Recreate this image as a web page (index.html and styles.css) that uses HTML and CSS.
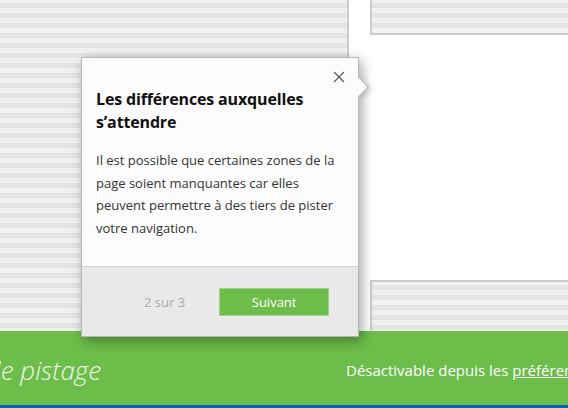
FILE: index.html
```html
<!DOCTYPE html>
<html lang="fr">
<head>
<meta charset="utf-8">
<link rel="stylesheet" href="styles.css">
</head>
<body>
<div class="page">
  <div class="main">
    <div class="left-panel"></div>
    <div class="right-col">
      <div class="box box-top"></div>
      <div class="spacer"></div>
      <div class="box box-bottom"></div>
    </div>
  </div>
  <div class="banner">
    <div class="banner-left"><span class="banner-title">Protection contre le pistage</span></div>
    <span class="banner-note">Désactivable depuis les <u>préférences</u></span>
  </div>

  <div class="popover">
    <div class="arrow"></div>
    <div class="pop-body">
      <button class="close" aria-label="Fermer">
        <svg width="12" height="12" viewBox="0 0 12 12"><path d="M1 1L11 11M11 1L1 11" stroke="#555" stroke-width="1.2" fill="none"/></svg>
      </button>
      <h2 class="pop-title">Les différences auxquelles s’attendre</h2>
      <p class="pop-text">Il est possible que certaines zones de la page soient manquantes car elles peuvent permettre à des tiers de pister votre navigation.</p>
    </div>
    <div class="pop-footer">
      <span class="step">2 sur 3</span>
      <button class="next">Suivant</button>
    </div>
  </div>
</div>
</body>
</html>
```
FILE: styles.css
```css
* { box-sizing: border-box; }
html, body { margin: 0; padding: 0; }
body {
  width: 568px;
  height: 408px;
  overflow: hidden;
  font-family: "Open Sans", "Noto Sans", sans-serif;
  background: #fff;
}
.page {
  position: relative;
  width: 568px;
  height: 408px;
  overflow: hidden;
  display: flex;
  flex-direction: column;
}
.main {
  height: 331px;
  display: flex;
  gap: 21px;
}
.left-panel, .box {
  background: repeating-linear-gradient(to bottom, #f1f1f1 0 3px, #e4e4e4 3px 8px, #f1f1f1 8px 10px);
}
.left-panel {
  width: 349px;
  border-right: 2px solid #c8cccf;
}
.right-col {
  flex: 1;
  display: flex;
  flex-direction: column;
  margin-right: -20px;
}
.box-top {
  height: 35px;
  border-left: 2px solid #c8cccf;
  border-bottom: 2px solid #c8cccf;
}
.spacer { flex: 1; }
.box-bottom {
  height: 51px;
  border-left: 2px solid #c8cccf;
  border-top: 2px solid #c8cccf;
}
.banner {
  height: 77px;
  background: #6dbd4a;
  border-bottom: 3px solid #0b63b6;
  display: flex;
  align-items: center;
  color: #fff;
  white-space: nowrap;
  padding-top: 3px;
}
.banner-left {
  width: 101px;
  flex: none;
  display: flex;
  justify-content: flex-end;
}
.banner-title {
  font-style: italic;
  font-weight: 300;
  font-size: 26px;
  color: #eef8e8;
}
.banner-note {
  font-size: 15px;
  margin-left: 245px;
}
.popover {
  position: absolute;
  left: 81px;
  top: 57px;
  width: 278px;
  height: 280px;
  background: #fcfcfc;
  border: 1px solid #b5b5b5;
  box-shadow: 3px 4px 12px rgba(0,0,0,0.35);
  display: flex;
  flex-direction: column;
}
.arrow {
  position: absolute;
  right: -8px;
  top: 22px;
  width: 14px;
  height: 14px;
  background: #fcfcfc;
  border-top: 1px solid #b5b5b5;
  border-right: 1px solid #b5b5b5;
  transform: rotate(45deg);
  box-shadow: 3px -1px 5px rgba(0,0,0,0.15);
}
.pop-body {
  position: relative;
  flex: 1;
  padding: 30px 14px 0 14px;
  background: #fcfcfc;
}
.close {
  position: absolute;
  top: 12px;
  right: 12px;
  width: 14px;
  height: 14px;
  padding: 1px;
  border: 0;
  background: transparent;
  display: flex;
}
.pop-title {
  margin: 0;
  font-size: 16px;
  font-weight: 700;
  line-height: 23px;
  color: #111;
  letter-spacing: -0.15px;
}
.pop-text {
  margin: 15px 0 0;
  font-size: 13px;
  line-height: 22.5px;
  color: #333;
  letter-spacing: 0;
}
.pop-footer {
  height: 70px;
  background: #e9e9e9;
  border-top: 1px solid #cfcfcf;
  display: flex;
  align-items: center;
  padding-left: 62px;
  gap: 34px;
}
.step {
  font-size: 13px;
  color: #aaa;
}
.next {
  width: 110px;
  height: 28px;
  background: #6dbd4a;
  border: 1px solid #a4cf8f;
  color: #fff;
  font-family: inherit;
  font-size: 13px;
}
```
